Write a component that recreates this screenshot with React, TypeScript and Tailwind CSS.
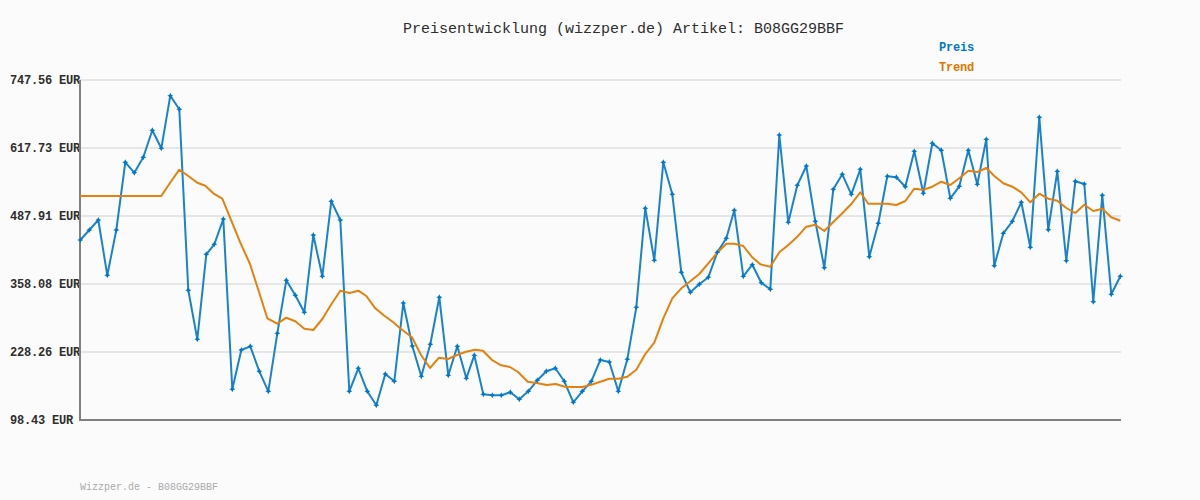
const PREIS: [number, number][] = [
  [80.3, 240], [89.3, 230], [98.3, 220], [107.3, 275.3], [116.3, 230], [125.3, 162.3], [134.3, 172.7], [143.3, 157.3],
  [152.3, 130.3], [161.3, 148.3], [170.3, 95.7], [179.3, 109.3], [188.3, 290.3], [197.3, 339.3], [206.3, 254.3], [214.3, 244.3],
  [223.3, 219], [232.3, 389.3], [241.3, 350], [250.3, 346.3], [259.3, 371.3], [268.3, 391.3], [277.3, 333.3], [286.3, 280.3],
  [295.3, 295.3], [304.3, 312.3], [313.3, 235], [322.3, 276.3], [331.3, 201.3], [340.3, 220], [349.3, 391.3], [358.3, 368.3],
  [367.3, 391.3], [376.3, 405.3], [385.3, 374], [394.3, 381.3], [403.3, 303], [412.3, 346], [421.3, 376.3], [430.3, 344.3],
  [439.3, 297.3], [448.3, 375.3], [457.3, 346.3], [466.3, 378.3], [474.3, 355.3], [483.3, 394.3], [492.3, 395.3], [501.3, 395.3],
  [510.3, 392.3], [519.3, 399.3], [528.3, 391.3], [537.3, 380.3], [546.3, 371.3], [555.3, 368.3], [564.3, 381.3], [573.3, 402.3],
  [582.3, 391.3], [591.3, 381.3], [600.3, 360], [609.3, 362], [618.3, 391.3], [627.3, 359.3], [636.3, 307.3], [645.3, 208.3],
  [654.3, 260.3], [663.3, 162.3], [672.3, 194.3], [681.3, 272.3], [690.3, 292.3], [699.3, 284.3], [708.3, 277.3], [717.3, 252.3],
  [726.3, 238.3], [734.3, 210.3], [743.3, 276.3], [752.3, 264.7], [761.3, 282.7], [770.3, 289.3], [779.3, 135], [788.3, 222.3],
  [797.3, 185.3], [806.3, 166], [815.3, 221.3], [824.3, 267.7], [833.3, 189.3], [842.3, 174.3], [851.3, 194.3], [860.3, 169.3],
  [869.3, 256.7], [878.3, 223.3], [887.3, 176.3], [896.3, 177.3], [905.3, 186.7], [914.3, 151.3], [923.3, 193.3], [932.3, 143.3],
  [941.3, 150.3], [950.3, 198.3], [959.3, 186.3], [968.3, 150.3], [977.3, 184.3], [986.3, 139.3], [994.3, 265.7], [1003.3, 233.3],
  [1012.3, 221.3], [1021.3, 202.3], [1030.3, 247.3], [1039.3, 117.3], [1048.3, 229.7], [1057.3, 171.3], [1066.3, 260.7], [1075.3, 181.3],
  [1084.3, 184], [1093.3, 301.7], [1102.3, 195.3], [1111.3, 294.3], [1120.3, 276.3],
];

const TREND: [number, number][] = [
  [80, 196], [161.3, 196], [170.3, 182.5], [179.3, 169.7], [188.3, 176], [197.3, 182.7], [205.3, 185.7], [213.3, 193.3], [222.3, 198.7],
  [231.3, 220.7], [240.3, 242.7], [250, 264], [259.3, 293], [267.3, 318.3], [277.3, 323.7], [286.3, 317.7], [295.3, 321.3], [304.3, 328.7],
  [313.3, 330], [322.3, 319], [331.3, 304.3], [340.3, 290.7], [349.3, 293], [358.3, 290.7], [366.3, 296], [375.3, 308.3], [384.3, 315.7],
  [393.3, 322.3], [400, 328.3], [412, 337.3], [421, 355], [430, 368], [439, 357.7], [448, 359], [457, 355], [466, 351.7], [475, 349.7],
  [483, 350.7], [492, 360], [501, 365.3], [510, 367], [518, 372], [527.7, 381.7], [536.7, 383], [546.7, 385], [555.7, 384], [564.7, 386.7],
  [573.3, 387], [582.3, 387], [591.3, 384.7], [600.3, 381.7], [609.3, 378.7], [618.3, 378.7], [627.3, 376.7], [636.3, 369.7], [645.3, 354],
  [654.3, 342.7], [663.3, 318.3], [672.3, 298.3], [681.3, 288.3], [690.3, 281.3], [699.3, 274], [708.3, 263.3], [717.3, 252.7], [726.3, 243.7],
  [734.3, 243.7], [743.3, 246], [752, 257], [760.3, 264.3], [770.3, 266.7], [779.3, 252.3], [788.3, 245], [796.7, 237.3], [806.3, 226.7],
  [815.3, 224.7], [824.3, 231], [833.3, 222], [842.3, 213.3], [851.3, 204], [860.3, 192.3], [868.3, 203.7], [887.3, 203.7], [896.3, 205],
  [905.3, 201], [914.3, 188.7], [923.3, 189.7], [932.3, 186.7], [941.3, 181.7], [950.3, 185], [959.3, 178.3], [968.3, 170.7], [977.3, 172],
  [986.3, 168], [994.3, 176], [1003.3, 183.3], [1012.3, 186.7], [1021.3, 192.3], [1030.3, 202.3], [1039.3, 193.7], [1048.3, 198.7],
  [1057.3, 200.7], [1066.3, 208], [1075.3, 213], [1084.3, 204.7], [1093.3, 211], [1102.3, 208.7], [1111.3, 217.3], [1120.3, 220.7],
];

const LABELS = ["747.56 EUR", "617.73 EUR", "487.91 EUR", "358.08 EUR", "228.26 EUR", "98.43 EUR"];
const GRID_Y = [80, 148, 216, 284, 352];

const toPoints = (pts: [number, number][]) => pts.map(([x, y]) => `${x},${y}`).join(" ");

export default function App() {
  return (
    <div className="flex h-[500px] w-[1200px] flex-col bg-[#fbfbfb] font-['Liberation_Mono',monospace] text-[#2e2e2e]">
      <h1 className="pt-[21px] pl-[403px] text-[15px] leading-[18px] font-normal whitespace-pre">
        Preisentwicklung (wizzper.de) Artikel: B08GG29BBF
      </h1>

      <div className="mt-[2px] flex flex-col gap-[6px] pl-[939px] text-[12px] leading-[14px] font-bold tracking-[-0.2px]">
        <span className="text-[#0077c8]">Preis</span>
        <span className="text-[#dd7700]">Trend</span>
      </div>

      <div className="flex">
        <div className="flex w-[80px] flex-col gap-[56px] pl-[10px] text-[12px] leading-[12px] font-bold tracking-[-0.2px]">
          {LABELS.map((label) => (
            <span key={label} className="whitespace-pre">{label}</span>
          ))}
        </div>
        <svg width="1046" height="350" viewBox="80 75 1046 350" className="block shrink-0 overflow-visible">
          {GRID_Y.map((y) => (
            <line key={y} x1="80" x2="1121" y1={y} y2={y} stroke="#e6e6e6" strokeWidth="2" />
          ))}
          <line x1="80" x2="80" y1="80" y2="421" stroke="#808080" strokeWidth="2" />
          <line x1="79" x2="1121" y1="420" y2="420" stroke="#808080" strokeWidth="2" />
          <polyline points={toPoints(PREIS)} fill="none" stroke="#1a83cc" strokeWidth="2" strokeLinejoin="round" />
          <polyline points={toPoints(TREND)} fill="none" stroke="#e2820f" strokeWidth="2" strokeLinejoin="round" />
          {PREIS.map(([x, y]) => (
            <path key={x} d={`M${x} ${y - 3}L${x + 1} ${y - 1}L${x + 3} ${y}L${x + 1} ${y + 1}L${x} ${y + 3}L${x - 1} ${y + 1}L${x - 3} ${y}L${x - 1} ${y - 1}Z`} fill="#0077c8" />
          ))}
        </svg>
      </div>

      <p className="mt-[55px] pl-[80px] text-[10px] leading-[12px] whitespace-pre text-[#aaaaaa]">
        Wizzper.de - B08GG29BBF
      </p>
    </div>
  );
}
